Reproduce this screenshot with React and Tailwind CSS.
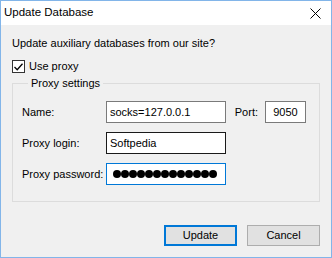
import React from "react";

const font = { fontFamily: "'Liberation Sans', Arial, sans-serif" };

function Field({ label, value, className = "", inputClass = "" }) {
  return (
    <div className={`flex items-center ${className}`}>
      <span className="w-[84px] shrink-0">{label}</span>
      <div
        className={`flex h-[22px] w-[120px] items-center bg-white px-[3px] ${inputClass}`}
      >
        {value}
      </div>
    </div>
  );
}

export default function App() {
  const dots = Array.from({ length: 13 });
  return (
    <div
      className="flex h-[258px] w-[332px] flex-col border border-[#82b5e9] bg-[#f0f0f0] text-[11px] text-black"
      style={font}
    >
      <div className="flex h-[24px] shrink-0 items-center justify-between bg-white pl-[3px] pr-[10px] text-[11.5px]">
        <span>Update Database</span>
        <svg width="11" height="11" viewBox="0 0 11 11" className="mt-[1px]">
          <path d="M0.5 0.5 L10.5 10.5 M10.5 0.5 L0.5 10.5" stroke="#000" strokeWidth="1" />
        </svg>
      </div>

      <div className="flex flex-1 flex-col px-[11px]">
        <p className="mt-[12px] leading-[13px]">Update auxiliary databases from our site?</p>

        <label className="mt-[10px] flex items-center gap-[4px] leading-[13px]">
          <span className="flex h-[13px] w-[13px] items-center justify-center border border-[#333] bg-white">
            <svg width="9" height="8" viewBox="0 0 9 8">
              <path d="M0.5 4 L3.2 6.8 L8.5 0.8" fill="none" stroke="#000" strokeWidth="1.3" />
            </svg>
          </span>
          <span>Use proxy</span>
        </label>

        <fieldset className="mt-[4px] h-[125px] border border-[#dcdcdc] pl-[9px] pr-[13px]">
          <legend className="ml-[6px] px-[3px] leading-[13px]">Proxy settings</legend>

          <div className="mt-[11px] flex items-center justify-between">
            <Field label="Name:" value="socks=127.0.0.1" inputClass="border border-[#7a7a7a]" />
            <div className="flex items-center">
              <span className="mr-[7px]">Port:</span>
              <div className="flex h-[22px] w-[41px] items-center justify-center border border-[#7a7a7a] bg-white">
                9050
              </div>
            </div>
          </div>

          <Field
            className="mt-[9px]"
            label="Proxy login:"
            value="Softpedia"
            inputClass="border border-[#1a1a1a]"
          />

          <Field
            className="mt-[9px]"
            label="Proxy password:"
            value={
              <span className="ml-[3px] flex">
                {dots.map((_, i) => (
                  <span key={i} className="h-[8px] w-[8px] rounded-full bg-black" />
                ))}
              </span>
            }
            inputClass="border border-[#0078d7]"
          />
        </fieldset>

        <div className="mt-[23px] flex justify-end gap-[10px]">
          <button className="h-[21px] w-[73px] border-2 border-[#0078d7] bg-[#e1e1e1]">
            Update
          </button>
          <button className="h-[21px] w-[73px] border border-[#adadad] bg-[#e1e1e1]">
            Cancel
          </button>
        </div>
      </div>
    </div>
  );
}
